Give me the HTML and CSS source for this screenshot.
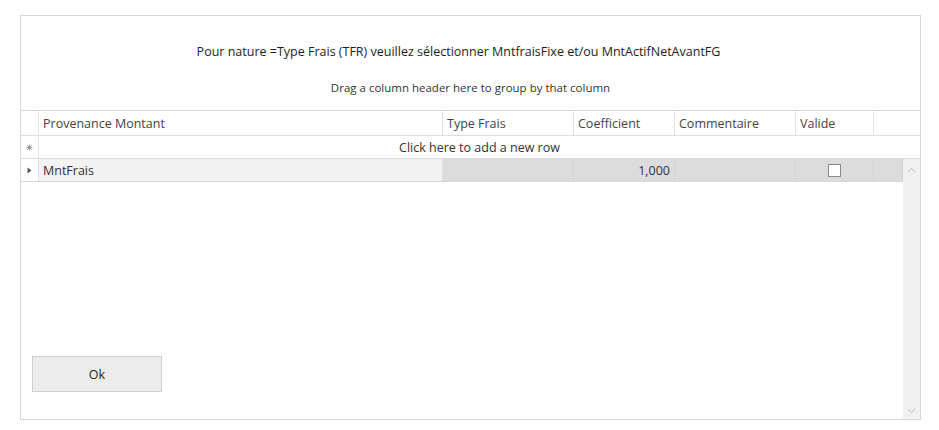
FILE: index.html
```html
<!DOCTYPE html>
<html>
<head>
<meta charset="utf-8">
<link rel="stylesheet" href="styles.css">
</head>
<body>
<div class="window">
  <div class="title">Pour nature =Type Frais (TFR) veuillez sélectionner MntfraisFixe et/ou MntActifNetAvantFG</div>
  <div class="group">Drag a column header here to group by that column</div>
  <div class="header">
    <div class="ind"></div>
    <div class="cell c-prov">Provenance Montant</div>
    <div class="cell c-type">Type Frais</div>
    <div class="cell c-coef">Coefficient</div>
    <div class="cell c-comm">Commentaire</div>
    <div class="cell c-val">Valide</div>
    <div class="cell c-fill"></div>
  </div>
  <div class="newrow">
    <div class="ind"><svg width="7" height="7" viewBox="0 0 7 7"><path d="M3.5 0.5V6.5M0.5 3.5H6.5M1.3 1.3L5.7 5.7M5.7 1.3L1.3 5.7" stroke="#9a9a9a" stroke-width="1"/></svg></div>
    <div class="newtext">Click here to add a new row</div>
  </div>
  <div class="body">
    <div class="rows">
      <div class="row">
        <div class="ind"><svg width="5" height="7" viewBox="0 0 5 7"><path d="M0.5 0.5L4.5 3.5L0.5 6.5Z" fill="#555"/></svg></div>
        <div class="cell c-prov light">MntFrais</div>
        <div class="cell c-type"></div>
        <div class="cell c-coef num">1,000</div>
        <div class="cell c-comm"></div>
        <div class="cell c-val center"><span class="check"></span></div>
        <div class="cell c-fill2"></div>
      </div>
      <div class="footer">
        <button class="ok">Ok</button>
      </div>
    </div>
    <div class="scroll">
      <svg class="arr" width="9" height="6" viewBox="0 0 9 6"><path d="M1 5L4.5 1.5L8 5" fill="none" stroke="#b8b8b8" stroke-width="1"/></svg>
      <svg class="arr" width="9" height="6" viewBox="0 0 9 6"><path d="M1 1L4.5 4.5L8 1" fill="none" stroke="#b8b8b8" stroke-width="1"/></svg>
    </div>
  </div>
</div>
</body>
</html>
```
FILE: styles.css
```css
html, body {
  margin: 0;
  padding: 0;
  background: #ffffff;
}
body {
  font-family: "Open Sans", "Noto Sans", sans-serif;
  color: #333;
}
.window {
  position: relative;
  margin: 15px 0 0 20px;
  width: 899px;
  height: 403px;
  border: 1px solid #d6d6d6;
  display: flex;
  flex-direction: column;
}
.title {
  height: 60px;
  padding: 27px 24px 0 0;
  box-sizing: border-box;
  text-align: center;
  font-size: 12.5px;
  color: #1e1e1e;
  line-height: 18px;
}
.group {
  height: 34px;
  box-sizing: border-box;
  padding-top: 4px;
  text-align: center;
  font-size: 11.5px;
  color: #333;
  line-height: 16px;
}
.header {
  display: flex;
  height: 26px;
  border-top: 1px solid #d6d6d6;
  border-bottom: 1px solid #dedede;
  box-sizing: border-box;
  font-size: 12.5px;
  color: #444;
}
.ind {
  width: 17px;
  flex: none;
  border-right: 1px solid #e3e3e3;
  display: flex;
  align-items: center;
  justify-content: center;
}
.cell {
  flex: none;
  box-sizing: border-box;
  border-right: 1px solid #e3e3e3;
  padding: 0 4px;
  display: flex;
  align-items: center;
  white-space: nowrap;
}
.c-prov { width: 404px; }
.c-type { width: 131px; }
.c-coef { width: 101px; }
.c-comm { width: 121px; }
.c-val { width: 78px; }
.c-fill { flex: 1; border-right: none; }
.c-fill2 { width: 29px; }
.newrow {
  display: flex;
  height: 23px;
  border-bottom: 1px solid #dedede;
  box-sizing: border-box;
  font-size: 12.5px;
  color: #333;
}
.newtext {
  flex: 1;
  display: flex;
  align-items: center;
  justify-content: center;
}
.body {
  flex: 1;
  display: flex;
}
.rows {
  flex: 1;
  display: flex;
  flex-direction: column;
}
.row {
  display: flex;
  height: 23px;
  border-bottom: 1px solid #d6d6d6;
  box-sizing: border-box;
  background: #dcdcdc;
  font-size: 12.5px;
  color: #333;
}
.row .ind {
  background: #ffffff;
  border-right-color: #e3e3e3;
}
.row .cell { border-right-color: #d3d3d3; }
.row .light { background: #f2f2f2; border-right-color: #e0e0e0; }
.num { justify-content: flex-end; }
.center { justify-content: center; }
.check {
  width: 11px;
  height: 11px;
  background: #fff;
  border: 1px solid #8a8a8a;
}
.footer {
  flex: 1;
  display: flex;
  align-items: flex-end;
  padding: 0 0 27px 11px;
}
.ok {
  width: 130px;
  height: 36px;
  background: #ececec;
  border: 1px solid #d0d0d0;
  border-radius: 0;
  font-family: "Open Sans", "Noto Sans", sans-serif;
  font-size: 12.5px;
  color: #222;
  padding: 0;
}
.scroll {
  width: 17px;
  background: #f0f0f0;
  display: flex;
  flex-direction: column;
  justify-content: space-between;
  align-items: center;
  padding: 8px 0 5px;
  box-sizing: border-box;
}
```
